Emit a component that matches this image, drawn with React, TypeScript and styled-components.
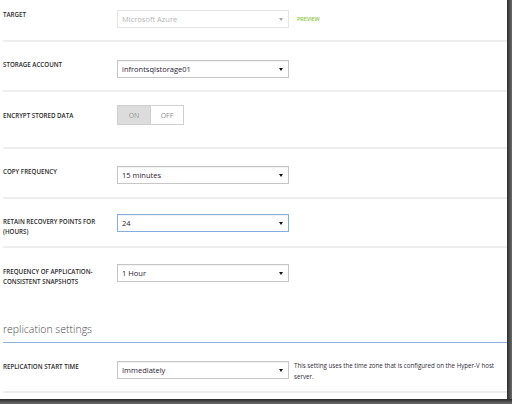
import styled, { createGlobalStyle } from "styled-components";

const GlobalStyle = createGlobalStyle`
  html, body {
    margin: 0;
    padding: 0;
    background: #fff;
  }
  body {
    font-family: "Open Sans", "Noto Sans", sans-serif;
  }
`;

const Frame = styled.div`
  width: 512px;
  height: 404px;
  display: flex;
  flex-direction: column;
  overflow: hidden;
`;

const Body = styled.div`
  display: flex;
  height: 399px;
`;

const Content = styled.div`
  width: 507px;
  height: 399px;
  background: #fff;
  padding-left: 3px;
  box-sizing: border-box;
  display: flex;
  flex-direction: column;
`;

const RightEdge = styled.div`
  width: 5px;
  background: linear-gradient(90deg, #2e2e2e, #6a6a6a);
`;

const BottomEdge = styled.div`
  height: 5px;
  background: linear-gradient(180deg, #2a2a2a, #6e6e6e);
`;

const Row = styled.div<{ $pt: number; $h: number; $line?: boolean }>`
  display: grid;
  grid-template-columns: 114px 172px 1fr;
  align-items: start;
  padding-top: ${(p) => p.$pt}px;
  height: ${(p) => p.$h}px;
  box-sizing: border-box;
  border-bottom: ${(p) => (p.$line ? "2px solid #eeeeee" : "none")};
`;

const Label = styled.div<{ $mt?: number }>`
  margin-top: ${(p) => p.$mt ?? 0}px;
  font-size: 6.2px;
  font-weight: 600;
  line-height: 10px;
  color: #2a2a2a;
  text-transform: uppercase;
`;

const Select = styled.div<{ $disabled?: boolean; $focused?: boolean }>`
  height: 18px;
  box-sizing: border-box;
  border: 1px solid
    ${(p) => (p.$focused ? "#86ace0" : p.$disabled ? "#e4e4e4" : "#c6c6c6")};
  box-shadow: ${(p) => (p.$disabled ? "none" : "inset 0 1px 1px rgba(0,0,0,0.06)")};
  display: flex;
  align-items: center;
  justify-content: space-between;
  padding: 0 5px 0 4px;
  font-size: 7.5px;
  color: ${(p) => (p.$disabled ? "#b4b4b4" : "#2a2233")};
  background: #fff;
`;

const Arrow = styled.span<{ $disabled?: boolean }>`
  width: 0;
  height: 0;
  border-left: 2.5px solid transparent;
  border-right: 2.5px solid transparent;
  border-top: 3.5px solid ${(p) => (p.$disabled ? "#a8a8a8" : "#111")};
`;

const Preview = styled.span`
  margin-left: 8px;
  margin-top: 5px;
  font-size: 5.5px;
  font-weight: 600;
  color: #8dc63f;
  letter-spacing: -0.1px;
`;

const Toggle = styled.div`
  display: flex;
  width: 67px;
  height: 20px;
  box-sizing: border-box;
  border: 1px solid #cfcfcf;
`;

const ToggleHalf = styled.div<{ $on?: boolean }>`
  flex: 1;
  display: flex;
  align-items: center;
  justify-content: center;
  font-size: 7px;
  color: ${(p) => (p.$on ? "#9a9a9a" : "#8a8a8a")};
  background: ${(p) => (p.$on ? "#dcdcdc" : "#fff")};
  border-left: ${(p) => (p.$on ? "none" : "1px solid #cfcfcf")};
`;

const Heading = styled.div`
  height: 53px;
  box-sizing: border-box;
  padding-top: 32px;
  line-height: 14px;
  border-bottom: 1px solid #8db2db;
  font-size: 10.5px;
  font-weight: 300;
  color: #4a4a4a;
`;

const Help = styled.div`
  margin-left: 5px;
  margin-top: -1px;
  font-size: 6.2px;
  line-height: 11px;
  color: #2e2a36;
`;

export default function App() {
  return (
    <>
      <GlobalStyle />
      <Frame>
        <Body>
          <Content>
            <Row $pt={10} $h={42} $line>
              <Label>Target</Label>
              <Select $disabled>
                Microsoft Azure
                <Arrow $disabled />
              </Select>
              <Preview>PREVIEW</Preview>
            </Row>
            <Row $pt={18} $h={50} $line>
              <Label>Storage Account</Label>
              <Select>
                infrontsqlstorage01
                <Arrow />
              </Select>
            </Row>
            <Row $pt={13} $h={57} $line>
              <Label $mt={6}>Encrypt Stored Data</Label>
              <Toggle>
                <ToggleHalf $on>ON</ToggleHalf>
                <ToggleHalf>OFF</ToggleHalf>
              </Toggle>
            </Row>
            <Row $pt={17} $h={50} $line>
              <Label $mt={1}>Copy Frequency</Label>
              <Select>
                15 minutes
                <Arrow />
              </Select>
            </Row>
            <Row $pt={15} $h={49} $line>
              <Label $mt={3}>
                Retain recovery points for
                <br />
                (hours)
              </Label>
              <Select $focused>
                24
                <Arrow />
              </Select>
            </Row>
            <Row $pt={16} $h={42}>
              <Label $mt={3}>
                Frequency of application-
                <br />
                consistent snapshots
              </Label>
              <Select>
                1 Hour
                <Arrow />
              </Select>
            </Row>
            <Heading>replication settings</Heading>
            <Row $pt={18} $h={50} $line>
              <Label $mt={1}>Replication start time</Label>
              <Select>
                Immediately
                <Arrow />
              </Select>
              <Help>
                This setting uses the time zone that is configured on the Hyper-V host
                server.
              </Help>
            </Row>
          </Content>
          <RightEdge />
        </Body>
        <BottomEdge />
      </Frame>
    </>
  );
}
